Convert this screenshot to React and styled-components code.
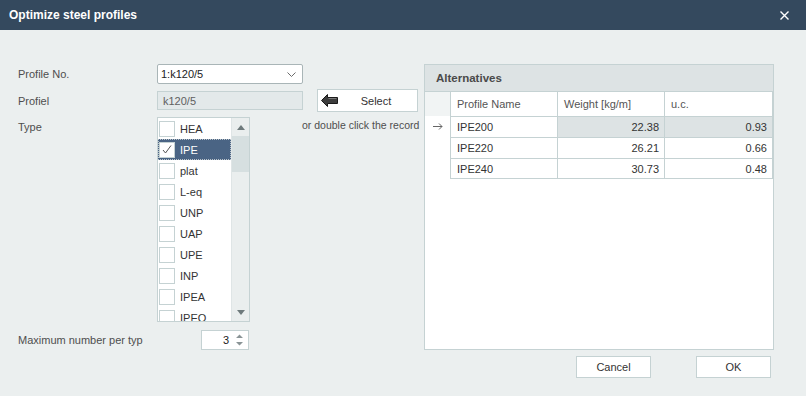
import React from 'react';
import styled, { createGlobalStyle } from 'styled-components';

const GlobalStyle = createGlobalStyle`
  html, body {
    margin: 0;
    padding: 0;
    background: #ebefef;
  }
  body {
    font-family: "Liberation Sans", Arial, sans-serif;
    font-size: 11px;
    color: #4b4b4b;
  }
`;

const Window = styled.div`
  width: 806px;
  height: 396px;
  background: #ebefef;
  overflow: hidden;
`;

const TitleBar = styled.div`
  height: 30px;
  background: #34495e;
  display: flex;
  align-items: center;
  justify-content: space-between;
  padding: 0 17px 0 9px;
  color: #fff;
`;

const Title = styled.span`
  font-family: "Liberation Sans", Arial, sans-serif;
  font-weight: bold;
  font-size: 12px;
`;

const CloseIcon = styled.svg`
  width: 9px;
  height: 9px;
  display: block;
`;

const Content = styled.div`
  padding: 34px 0 0 18px;
`;

const TopRow = styled.div`
  display: flex;
  align-items: flex-start;
`;

const LeftCol = styled.div`
  width: 284px;
  display: flex;
  flex-direction: column;
`;

const FormGrid = styled.div`
  display: grid;
  grid-template-columns: 139px 146px;
  row-gap: 7px;
`;

const Label = styled.div`
  display: flex;
  align-items: ${(p) => (p.$top ? 'flex-start' : 'center')};
  padding-top: ${(p) => (p.$top ? '4px' : '0')};
  color: #4e4e4e;
`;

const Combo = styled.div`
  height: 20px;
  box-sizing: border-box;
  border: 1px solid #a9b5b7;
  border-radius: 2px;
  background: #fff;
  display: flex;
  align-items: center;
  justify-content: space-between;
  padding: 0 6px 0 3px;
  color: #222;
`;

const ReadOnly = styled.div`
  height: 19px;
  box-sizing: border-box;
  border: 1px solid #c5d2d3;
  background: #e3e9ea;
  display: flex;
  align-items: center;
  padding: 0 5px;
  color: #606060;
`;

const ListBox = styled.div`
  width: 93px;
  height: 205px;
  box-sizing: border-box;
  border: 1px solid #c5d2d3;
  background: #fff;
  display: flex;
  overflow: hidden;
`;

const Items = styled.div`
  flex: 1;
  display: flex;
  flex-direction: column;
`;

const Item = styled.div`
  height: 21px;
  flex: none;
  box-sizing: border-box;
  display: flex;
  align-items: center;
  gap: 5px;
  padding-left: 1px;
  background: ${(p) => (p.$selected ? '#4a6484' : '#fff')};
  color: ${(p) => (p.$selected ? '#fff' : '#333')};
  outline: ${(p) => (p.$selected ? '1px dotted #b9c2c9' : 'none')};
  outline-offset: -1px;
`;

const Check = styled.div`
  width: 16px;
  height: 16px;
  box-sizing: border-box;
  border: 1px solid #c5d2d3;
  background: #fff;
  display: flex;
  align-items: center;
  justify-content: center;
`;

const ScrollBar = styled.div`
  width: 17px;
  background: #eaeeee;
  border-left: 1px solid #dfe5e6;
  display: flex;
  flex-direction: column;
`;

const ScrollBtn = styled.div`
  height: 18px;
  display: flex;
  align-items: center;
  justify-content: center;
`;

const Thumb = styled.div`
  height: 36px;
  background: #d6dfe0;
`;

const Track = styled.div`
  flex: 1;
`;

const MaxRow = styled.div`
  width: 231px;
  margin-top: 8px;
  display: flex;
  align-items: center;
  justify-content: space-between;
`;

const Spinner = styled.div`
  width: 48px;
  height: 20px;
  box-sizing: border-box;
  border: 1px solid #c5d2d3;
  background: #fff;
  display: flex;
  align-items: center;
  justify-content: flex-end;
  gap: 7px;
  padding-right: 5px;
  color: #222;
`;

const MiddleCol = styled.div`
  width: 122px;
  padding-top: 25px;
  display: flex;
  flex-direction: column;
`;

const SelectButton = styled.div`
  margin-left: 15px;
  width: 101px;
  height: 23px;
  box-sizing: border-box;
  border: 1px solid #c5d2d3;
  background: #fff;
  display: flex;
  align-items: center;
  padding-left: 3px;
  color: #333;
`;

const ButtonText = styled.span`
  flex: 1;
  text-align: center;
  padding-right: 3px;
`;

const Hint = styled.div`
  margin-top: 7px;
  white-space: nowrap;
  font-size: 10.5px;
  color: #4e4e4e;
`;

const Panel = styled.div`
  width: 350px;
  height: 286px;
  box-sizing: border-box;
  border: 1px solid #c5d2d3;
  background: #fff;
  display: flex;
  flex-direction: column;
`;

const PanelHeader = styled.div`
  height: 26px;
  background: #dde3e4;
  display: flex;
  align-items: center;
  padding-left: 11px;
  font-weight: bold;
  color: #4a4a4a;
  font-size: 11.5px;
`;

const GridRow = styled.div`
  display: grid;
  grid-template-columns: 26px 107px 107px 108px;
  height: ${(p) => (p.$head ? '25px' : '21px')};
  box-sizing: border-box;
`;

const Cell = styled.div`
  display: flex;
  align-items: center;
  justify-content: ${(p) => (p.$num ? 'flex-end' : 'flex-start')};
  padding: 0 5px 0 6px;
  box-sizing: border-box;
  border-right: 1px solid #c5d2d3;
  border-top: 1px solid #c5d2d3;
  background: ${(p) => (p.$active ? '#dde3e4' : '#fff')};
  color: ${(p) => (p.$head ? '#555' : '#333')};
  border-bottom: ${(p) => (p.$last ? '1px solid #c5d2d3' : 'none')};
`;

const Indicator = styled.div`
  display: flex;
  align-items: center;
  justify-content: center;
  border-right: 1px solid #c5d2d3;
  border-top: ${(p) => (p.$head ? '1px solid #c5d2d3' : 'none')};
  background: ${(p) => (p.$head ? '#f1f4f4' : '#fff')};
`;

const Footer = styled.div`
  display: flex;
  justify-content: flex-end;
  gap: 45px;
  padding-right: 35px;
  margin-top: 6px;
`;

const DialogButton = styled.div`
  width: 75px;
  height: 22px;
  box-sizing: border-box;
  border: 1px solid #c5d2d3;
  background: #fff;
  display: flex;
  align-items: center;
  justify-content: center;
  color: #333;
`;

const types = ['HEA', 'IPE', 'plat', 'L-eq', 'UNP', 'UAP', 'UPE', 'INP', 'IPEA', 'IPEO'];

const rows = [
  { name: 'IPE200', weight: '22.38', uc: '0.93', current: true },
  { name: 'IPE220', weight: '26.21', uc: '0.66' },
  { name: 'IPE240', weight: '30.73', uc: '0.48' },
];

const Tri = ({ down }) => (
  <svg width="8" height="5" viewBox="0 0 8 5">
    <path d={down ? 'M0 0 L8 0 L4 5 Z' : 'M0 5 L8 5 L4 0 Z'} fill="#6e7a7c" />
  </svg>
);

const App = () => {
  return (
    <Window>
      <GlobalStyle />
      <TitleBar>
        <Title>Optimize steel profiles</Title>
        <CloseIcon viewBox="0 0 9 9">
          <path d="M0.5 0.5 L8.5 8.5 M8.5 0.5 L0.5 8.5" stroke="#fff" strokeWidth="1.4" />
        </CloseIcon>
      </TitleBar>

      <Content>
        <TopRow>
          <LeftCol>
            <FormGrid>
              <Label>Profile No.</Label>
              <Combo>
                <span>1:k120/5</span>
                <svg width="9" height="5" viewBox="0 0 9 5">
                  <path d="M0.5 0.5 L4.5 4.5 L8.5 0.5" fill="none" stroke="#6b6b6b" strokeWidth="1" />
                </svg>
              </Combo>

              <Label>Profiel</Label>
              <ReadOnly>k120/5</ReadOnly>

              <Label $top>Type</Label>
              <ListBox>
                <Items>
                  {types.map((t) => (
                    <Item key={t} $selected={t === 'IPE'}>
                      <Check>
                        {t === 'IPE' && (
                          <svg width="10" height="9" viewBox="0 0 10 9">
                            <path d="M1 5 L3.5 8 L9 0.5" fill="none" stroke="#555" strokeWidth="1" />
                          </svg>
                        )}
                      </Check>
                      {t}
                    </Item>
                  ))}
                </Items>
                <ScrollBar>
                  <ScrollBtn><Tri /></ScrollBtn>
                  <Thumb />
                  <Track />
                  <ScrollBtn><Tri down /></ScrollBtn>
                </ScrollBar>
              </ListBox>
            </FormGrid>

            <MaxRow>
              <Label>Maximum number per typ</Label>
              <Spinner>
                <span>3</span>
                <svg width="7" height="12" viewBox="0 0 7 12">
                  <path d="M0 4 L7 4 L3.5 0.5 Z M0 8 L7 8 L3.5 11.5 Z" fill="#8a9496" />
                </svg>
              </Spinner>
            </MaxRow>
          </LeftCol>

          <MiddleCol>
            <SelectButton>
              <svg width="17" height="13" viewBox="0 0 17 13">
                <path d="M0.5 6.5 L6.5 0.5 L6.5 3.5 L16.5 3.5 L16.5 9.5 L6.5 9.5 L6.5 12.5 Z" fill="#3d3d3d" stroke="#1a1a1a" strokeWidth="1" />
                <path d="M7.5 4.5 L15.5 4.5" stroke="#7a7a7a" strokeWidth="1" />
              </svg>
              <ButtonText>Select</ButtonText>
            </SelectButton>
            <Hint>or double click the record</Hint>
          </MiddleCol>

          <Panel>
            <PanelHeader>Alternatives</PanelHeader>
            <GridRow $head>
              <Indicator $head />
              <Cell $head>Profile Name</Cell>
              <Cell $head>Weight [kg/m]</Cell>
              <Cell $head>u.c.</Cell>
            </GridRow>
            {rows.map((r, i) => (
              <GridRow key={r.name}>
                <Indicator>
                  {r.current && (
                    <svg width="10" height="7" viewBox="0 0 10 7">
                      <path d="M0 3.5 L9 3.5 M6 0.5 L9 3.5 L6 6.5" fill="none" stroke="#666" strokeWidth="1" />
                    </svg>
                  )}
                </Indicator>
                <Cell $last={i === rows.length - 1}>{r.name}</Cell>
                <Cell $num $active={r.current} $last={i === rows.length - 1}>{r.weight}</Cell>
                <Cell $num $active={r.current} $last={i === rows.length - 1}>{r.uc}</Cell>
              </GridRow>
            ))}
          </Panel>
        </TopRow>

        <Footer>
          <DialogButton>Cancel</DialogButton>
          <DialogButton>OK</DialogButton>
        </Footer>
      </Content>
    </Window>
  );
};

export default App;
